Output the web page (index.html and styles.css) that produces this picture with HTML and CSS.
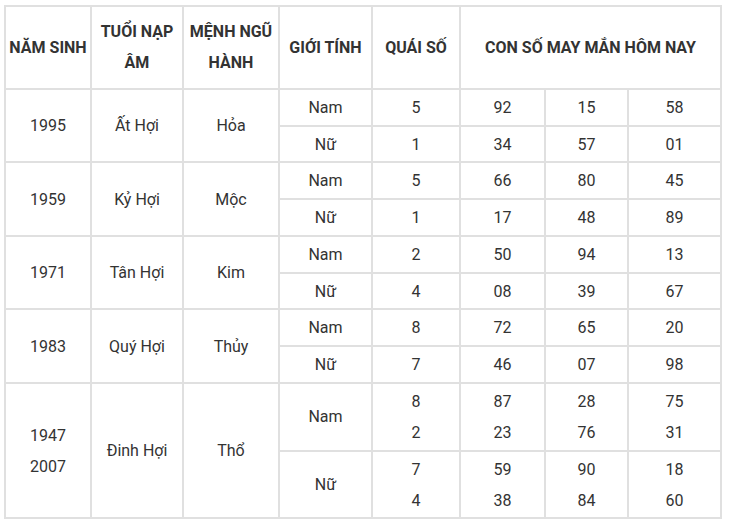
FILE: index.html
```html
<!DOCTYPE html>
<html lang="vi">
<head>
<meta charset="utf-8">
<title>Con số may mắn</title>
<link rel="stylesheet" href="styles.css">
</head>
<body>
<div class="wrap">
<table class="luck">
  <colgroup>
    <col class="c1"><col class="c2"><col class="c3"><col class="c4">
    <col class="c5"><col class="c6"><col class="c7"><col class="c8">
  </colgroup>
  <thead>
    <tr>
      <th>NĂM SINH</th>
      <th>TUỔI NẠP ÂM</th>
      <th>MỆNH NGŨ HÀNH</th>
      <th>GIỚI TÍNH</th>
      <th>QUÁI SỐ</th>
      <th colspan="3">CON SỐ MAY MẮN HÔM NAY</th>
    </tr>
  </thead>
  <tbody>
    <tr>
      <td rowspan="2">1995</td><td rowspan="2">Ất Hợi</td><td rowspan="2">Hỏa</td>
      <td>Nam</td><td>5</td><td>92</td><td>15</td><td>58</td>
    </tr>
    <tr><td>Nữ</td><td>1</td><td>34</td><td>57</td><td>01</td></tr>
    <tr>
      <td rowspan="2">1959</td><td rowspan="2">Kỷ Hợi</td><td rowspan="2">Mộc</td>
      <td>Nam</td><td>5</td><td>66</td><td>80</td><td>45</td>
    </tr>
    <tr><td>Nữ</td><td>1</td><td>17</td><td>48</td><td>89</td></tr>
    <tr>
      <td rowspan="2">1971</td><td rowspan="2">Tân Hợi</td><td rowspan="2">Kim</td>
      <td>Nam</td><td>2</td><td>50</td><td>94</td><td>13</td>
    </tr>
    <tr><td>Nữ</td><td>4</td><td>08</td><td>39</td><td>67</td></tr>
    <tr>
      <td rowspan="2">1983</td><td rowspan="2">Quý Hợi</td><td rowspan="2">Thủy</td>
      <td>Nam</td><td>8</td><td>72</td><td>65</td><td>20</td>
    </tr>
    <tr><td>Nữ</td><td>7</td><td>46</td><td>07</td><td>98</td></tr>
    <tr>
      <td rowspan="2">1947<br>2007</td><td rowspan="2">Đinh Hợi</td><td rowspan="2">Thổ</td>
      <td>Nam</td><td>8<br>2</td><td>87<br>23</td><td>28<br>76</td><td>75<br>31</td>
    </tr>
    <tr><td>Nữ</td><td>7<br>4</td><td>59<br>38</td><td>90<br>84</td><td>18<br>60</td></tr>
  </tbody>
</table>
</div>
</body>
</html>
```

FILE: styles.css
```css
html, body {
  margin: 0;
  padding: 0;
  background: #ffffff;
}

.wrap {
  padding: 5px 0 0 4px;
}

.luck {
  table-layout: fixed;
  width: 718px;
  border-collapse: separate;
  border-spacing: 0;
  border-top: 2px solid #e0e0e0;
  border-left: 2px solid #e0e0e0;
  font-family: Roboto, "Noto Sans", "Liberation Sans", sans-serif;
  font-size: 16px;
  color: #333333;
}

.c1 { width: 86px; }
.c2 { width: 92px; }
.c3 { width: 96px; }
.c4 { width: 93px; }
.c5 { width: 88px; }
.c6 { width: 85px; }
.c7 { width: 83px; }
.c8 { width: 93px; }

.luck th,
.luck td {
  border-right: 2px solid #e0e0e0;
  border-bottom: 2px solid #e0e0e0;
  text-align: center;
  vertical-align: middle;
  line-height: 31px;
}

.luck th {
  font-weight: 700;
  padding: 9.4px 3px;
}

.luck td {
  font-weight: 400;
  padding: 2px 3px 1.75px;
}
```
